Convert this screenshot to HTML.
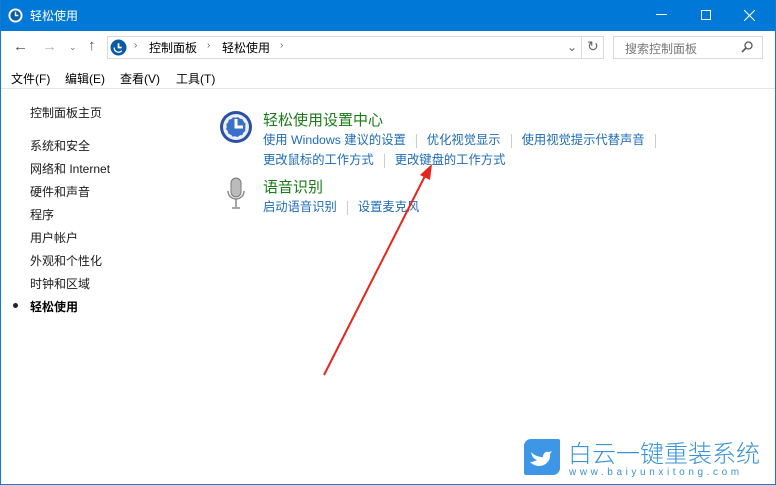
<!DOCTYPE html>
<html><head><meta charset="utf-8"><style>
*{margin:0;padding:0;box-sizing:border-box}
body{width:776px;height:485px;overflow:hidden;background:#fff;font-family:"Liberation Sans","Noto Sans CJK SC",sans-serif;font-size:12px;color:#000;position:relative}
.a{position:absolute;white-space:nowrap}
.frame{position:absolute;left:0;top:0;width:776px;height:485px;border:1px solid #1979ca;border-top:none}
.title{position:absolute;left:0;top:0;width:776px;height:31px;background:#0078d7;color:#fff}
.lnk{color:#1e6bb8;font-size:12.3px}
.sep{display:inline-block;width:1px;height:14px;background:#ccc;vertical-align:middle;margin:0 10px}
.left div{position:absolute;left:30px;color:#1a1a1a}
</style></head><body>
<div class="title">
 <svg class="a" style="left:8px;top:8px" width="15" height="15" viewBox="0 0 16 16"><circle cx="8" cy="8" r="7.5" fill="#fff"/><circle cx="8" cy="8" r="5.5" fill="#0b5aa8"/><path d="M8 4v4h3" stroke="#fff" stroke-width="1.5" fill="none"/></svg>
 <div class="a" style="left:30px;top:7px;font-size:12px">轻松使用</div>
 <div class="a" style="left:656px;top:14px;width:11px;height:1px;background:#fff"></div>
 <div class="a" style="left:701px;top:10px;width:10px;height:10px;border:1px solid #fff"></div>
 <svg class="a" style="left:744px;top:10px" width="11" height="11"><path d="M0 0L11 11M11 0L0 11" stroke="#fff" stroke-width="1.1"/></svg>
</div>
<div class="frame"></div>
<div class="a" style="left:13px;top:38px;font-size:15px;color:#555">←</div>
<div class="a" style="left:42px;top:38px;font-size:15px;color:#bbb">→</div>
<div class="a" style="left:69px;top:42px;font-size:9px;color:#777">⌄</div>
<div class="a" style="left:88px;top:37px;font-size:15px;color:#555">↑</div>
<div class="a" style="left:107px;top:36px;width:497px;height:23px;border:1px solid #d9d9d9"></div>
<div class="a" style="left:581px;top:36px;width:1px;height:23px;background:#d9d9d9"></div>
<div class="a" style="left:567px;top:40px;color:#666">⌄</div>
<div class="a" style="left:587px;top:38px;font-size:14px;color:#666">↻</div>
<svg class="a" style="left:110px;top:39px" width="17" height="17" viewBox="0 0 16 16"><circle cx="8" cy="8" r="7.5" fill="#0b5aa8"/><path d="M8 4v4h3" stroke="#fff" stroke-width="1.6" fill="none"/><path d="M4 8a4 4 0 0 0 7 3" stroke="#fff" stroke-width="1.2" fill="none"/></svg>
<div class="a" style="left:134px;top:40px;color:#666;font-size:10px">›</div>
<div class="a" style="left:149px;top:39px">控制面板</div>
<div class="a" style="left:207px;top:40px;color:#666;font-size:10px">›</div>
<div class="a" style="left:222px;top:39px">轻松使用</div>
<div class="a" style="left:280px;top:40px;color:#666;font-size:10px">›</div>
<div class="a" style="left:613px;top:36px;width:150px;height:23px;border:1px solid #d9d9d9"></div>
<div class="a" style="left:625px;top:40px;color:#777">搜索控制面板</div>
<svg class="a" style="left:741px;top:41px" width="12" height="12" viewBox="0 0 12 12"><circle cx="7.5" cy="4.5" r="3.5" stroke="#555" stroke-width="1.3" fill="none"/><path d="M5 7L1 11" stroke="#555" stroke-width="1.6"/></svg>
<div class="a" style="left:11px;top:70px">文件(F)</div>
<div class="a" style="left:65px;top:70px">编辑(E)</div>
<div class="a" style="left:120px;top:70px">查看(V)</div>
<div class="a" style="left:176px;top:70px">工具(T)</div>
<div class="a" style="left:1px;top:88px;width:774px;height:1px;background:#e3e3e3"></div>
<div class="left">
<div style="top:104px">控制面板主页</div>
<div style="top:137px">系统和安全</div>
<div style="top:160px">网络和 Internet</div>
<div style="top:183px">硬件和声音</div>
<div style="top:206px">程序</div>
<div style="top:229px">用户帐户</div>
<div style="top:252px">外观和个性化</div>
<div style="top:275px">时钟和区域</div>
<div style="top:298px;font-weight:bold;color:#000">轻松使用</div>
</div>
<div class="a" style="left:13px;top:303px;width:5px;height:5px;border-radius:50%;background:#223"></div>
<svg class="a" style="left:219px;top:110px" width="34" height="34" viewBox="0 0 34 34"><circle cx="17" cy="17" r="16" fill="#2a4fa5"/><circle cx="17" cy="17" r="13" fill="#e8eefa"/><circle cx="17" cy="17" r="10" fill="#3c6fc8"/><path d="M17 9v8h7" stroke="#fff" stroke-width="3" fill="none"/><circle cx="17" cy="17" r="10" fill="none" stroke="#fff" stroke-width="1" stroke-dasharray="3 2"/></svg>
<div class="a" style="left:263px;top:109px;font-size:15px;color:#1a7a16">轻松使用设置中心</div>
<div class="a lnk" style="left:263px;top:130px">使用 Windows 建议的设置<span class="sep"></span>优化视觉显示<span class="sep"></span>使用视觉提示代替声音<span class="sep"></span></div>
<div class="a lnk" style="left:263px;top:150px">更改鼠标的工作方式<span class="sep"></span>更改键盘的工作方式</div>
<svg class="a" style="left:226px;top:177px" width="20" height="34" viewBox="0 0 20 34"><rect x="5" y="1" width="10" height="19" rx="5" fill="#bbb" stroke="#777"/><path d="M2 14a8 8 0 0 0 16 0" stroke="#888" fill="none" stroke-width="1.5"/><path d="M10 22v8M6 31h8" stroke="#888" stroke-width="1.5"/></svg>
<div class="a" style="left:263px;top:176px;font-size:15px;color:#1a7a16">语音识别</div>
<div class="a lnk" style="left:263px;top:197px">启动语音识别<span class="sep"></span>设置麦克风</div>
<svg class="a" style="left:0;top:0" width="776" height="485"><line x1="324" y1="375" x2="428" y2="170" stroke="#e8241c" stroke-width="2"/><path d="M432 164l-2 16-10-5z" fill="#e8241c"/></svg>
<div class="a" style="left:524px;top:439px;width:36px;height:36px;border-radius:7px 2px 7px 2px;background:#3d97e6"></div>
<svg class="a" style="left:528px;top:446px" width="28" height="24" viewBox="0 0 28 24"><path d="M3 6c4 4 8 5 12 5 0-4 3-6 6-5l3-1-2 3c1 6-4 12-11 12-4 0-7-2-9-4 3 0 5-1 7-2-3-1-5-3-6-8z" fill="#fff"/></svg>
<div class="a" style="left:568px;top:438px;font-size:24px;color:#3a93d8;line-height:28px;font-family:'Noto Sans CJK SC',sans-serif;font-weight:300">白云一键重装系统</div>
<div class="a" style="left:569px;top:467px;font-size:10px;color:#3a93d8;letter-spacing:3.6px">www.baiyunxitong.com</div>
</body></html>
